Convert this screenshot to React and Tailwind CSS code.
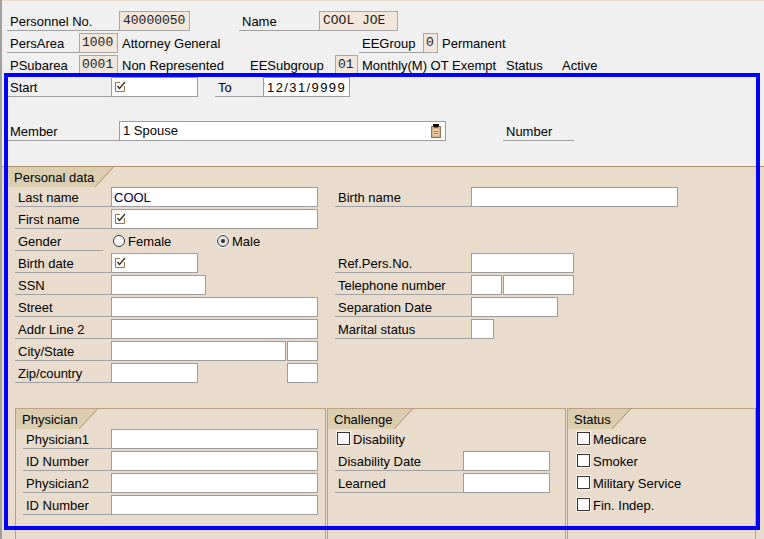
import React from "react";

const Lbl = ({ c = "", children }) => (
  <div className={`h-[20px] shrink-0 border-b border-[#a0a0a0] pl-[3px] pt-[1px] leading-[20px] whitespace-nowrap ${c}`}>{children}</div>
);

const Inp = ({ c = "", children }) => (
  <div className={`h-[20px] shrink-0 border border-[#9c9c9c] bg-white leading-[18px] whitespace-nowrap ${c}`}>{children}</div>
);

const Txt = ({ c = "", children }) => (
  <div className={`pt-[1px] leading-[20px] whitespace-nowrap ${c}`}>{children}</div>
);

const Box = ({ c = "", children }) => (
  <div className={`h-[20px] shrink-0 border border-[#a8a8a8] bg-[#f3e7db] text-[#222] leading-[18px] whitespace-nowrap [font-family:'Liberation_Mono',monospace] ${c}`}>{children}</div>
);

const InitIcon = () => (
  <svg width="11" height="11" viewBox="0 0 11 11" className="block">
    <path d="M0.5 1.5 V10.5 H9.5 V5" fill="none" stroke="#a0703a" />
    <path d="M0.5 1.5 H5" fill="none" stroke="#a0703a" />
    <path d="M2.5 5 L4.5 7.5 L10 1" fill="none" stroke="#2a2a2a" strokeWidth="1.3" />
  </svg>
);

const ClipIcon = () => (
  <svg width="11" height="14" viewBox="0 0 11 14" className="block">
    <rect x="0.5" y="2.5" width="9" height="11" fill="#d8b088" stroke="#9a7048" />
    <rect x="2.5" y="5.5" width="5" height="6" fill="#f2dcc0" stroke="none" />
    <path d="M3 7.5 H7 M3 9.5 H7" stroke="#9a7048" />
    <path d="M2 0 H8 V2 L7 3.5 H3 L2 2 Z" fill="#111" />
  </svg>
);

const Tab = ({ children }) => (
  <div className="flex h-[20px] shrink-0">
    <div className="h-[20px] bg-[#dacdb0] pl-[6px] pr-[1px] pt-[1px] leading-[19px] whitespace-nowrap">{children}</div>
    <svg width="19" height="20" viewBox="0 0 19 20" className="block">
      <polygon points="0,0 18.5,0 0,20" fill="#dacdb0" />
      <line x1="18.5" y1="0" x2="0" y2="20" stroke="#b09068" strokeWidth="1" />
    </svg>
  </div>
);

const Check = () => (
  <div className="mt-[3px] h-[13px] w-[13px] shrink-0 border border-[#333] bg-white shadow-[0_0_0_1px_#f8f4ee]" />
);

const Row = ({ c = "", children }) => <div className={`flex h-[20px] ${c}`}>{children}</div>;

export default function App() {
  return (
    <div className="relative h-[539px] w-[764px] overflow-hidden border-l-2 border-[#a0a0a0] bg-[#f0f0f0] text-[13px] text-black [font-family:'Liberation_Sans',Arial,sans-serif]">
      <div className="h-[1px] bg-[#ead9c8]" />

      {/* header + top of form */}
      <div className="flex flex-col gap-[2px] pl-[5px] pt-[10px]">
        <Row>
          <Lbl c="w-[112px]">Personnel No.</Lbl>
          <Box c="w-[71px] pl-[3px]">40000050</Box>
          <Lbl c="ml-[49px] w-[80px]">Name</Lbl>
          <Box c="w-[79px] pl-[3px]">COOL JOE</Box>
        </Row>
        <Row>
          <Lbl c="w-[72px]">PersArea</Lbl>
          <Box c="w-[39px] pl-[2px]">1000</Box>
          <Txt c="w-[241px] shrink-0 pl-[4px]">Attorney General</Txt>
          <Lbl c="w-[64px]">EEGroup</Lbl>
          <Box c="w-[15px] pl-[2px]">0</Box>
          <Txt c="pl-[4px]">Permanent</Txt>
        </Row>
        <Row>
          <Lbl c="w-[72px]">PSubarea</Lbl>
          <Box c="w-[39px] pl-[2px]">0001</Box>
          <Txt c="w-[129px] shrink-0 pl-[4px]">Non Represented</Txt>
          <Lbl c="w-[88px]">EESubgroup</Lbl>
          <Box c="w-[23px] pl-[2px]">01</Box>
          <Txt c="w-[145px] shrink-0 pl-[4px]">Monthly(M) OT Exempt</Txt>
          <Txt c="w-[56px] shrink-0 pl-[3px]">Status</Txt>
          <Txt c="pl-[3px]">Active</Txt>
        </Row>
        <Row>
          <Lbl c="w-[104px]">Start</Lbl>
          <Inp c="w-[87px] pl-[3px] pt-[3px]">
            <InitIcon />
          </Inp>
          <Lbl c="ml-[17px] w-[48px]">To</Lbl>
          <Inp c="w-[87px] pl-[3px] pt-[1px] tracking-[1.4px]">12/31/9999</Inp>
        </Row>
        <div className="h-[20px]" />
        <Row>
          <Lbl c="w-[112px]">Member</Lbl>
          <Inp c="flex w-[327px] items-center justify-between pl-[3px] pr-[3px]">
            <span>1 Spouse</span>
            <ClipIcon />
          </Inp>
          <Lbl c="ml-[57px] w-[71px]">Number</Lbl>
        </Row>
      </div>

      {/* beige section */}
      <div className="mt-[25px] h-[400px] border-t border-[#b4906a] bg-[#e9dccc]">
        <div className="pl-[6px]">
          <Tab>Personal data</Tab>
        </div>

        <div className="flex pl-[13px]">
          <div className="flex w-[303px] shrink-0 flex-col gap-[2px]">
            <Row>
              <Lbl c="w-[96px]">Last name</Lbl>
              <Inp c="w-[207px] pl-[2px] pt-[1px] text-[#000040]">COOL</Inp>
            </Row>
            <Row>
              <Lbl c="w-[96px]">First name</Lbl>
              <Inp c="w-[207px] pl-[3px] pt-[3px]">
                <InitIcon />
              </Inp>
            </Row>
            <Row c="items-start">
              <Lbl c="w-[88px]">Gender</Lbl>
              <div className="ml-[8px] flex w-[104px] shrink-0 items-start pl-[2px]">
                <div className="mt-[4px] h-[12px] w-[12px] shrink-0 rounded-full border border-[#333] bg-white" />
                <span className="ml-[3px] leading-[22px]">Female</span>
              </div>
              <div className="flex items-start pl-[2px]">
                <div className="mt-[4px] flex h-[12px] w-[12px] shrink-0 items-center justify-center rounded-full border border-[#333] bg-[#e2e2e2] shadow-[0_0_0_1px_#ffffff]">
                  <div className="h-[4px] w-[4px] rounded-full bg-[#333]" />
                </div>
                <span className="ml-[3px] leading-[22px]">Male</span>
              </div>
            </Row>
            <Row>
              <Lbl c="w-[96px]">Birth date</Lbl>
              <Inp c="w-[87px] pl-[3px] pt-[3px]">
                <InitIcon />
              </Inp>
            </Row>
            <Row>
              <Lbl c="w-[96px]">SSN</Lbl>
              <Inp c="w-[95px]" />
            </Row>
            <Row>
              <Lbl c="w-[96px]">Street</Lbl>
              <Inp c="w-[207px]" />
            </Row>
            <Row>
              <Lbl c="w-[96px]">Addr Line 2</Lbl>
              <Inp c="w-[207px]" />
            </Row>
            <Row>
              <Lbl c="w-[96px]">City/State</Lbl>
              <Inp c="w-[175px]" />
              <Inp c="ml-[1px] w-[31px]" />
            </Row>
            <Row>
              <Lbl c="w-[96px]">Zip/country</Lbl>
              <Inp c="w-[87px]" />
              <Inp c="ml-[89px] w-[31px]" />
            </Row>
          </div>

          <div className="ml-[17px] flex flex-col gap-[2px]">
            <Row>
              <Lbl c="w-[136px]">Birth name</Lbl>
              <Inp c="w-[207px]" />
            </Row>
            <div className="h-[20px]" />
            <div className="h-[20px]" />
            <Row>
              <Lbl c="w-[136px]">Ref.Pers.No.</Lbl>
              <Inp c="w-[103px]" />
            </Row>
            <Row>
              <Lbl c="w-[136px]">Telephone number</Lbl>
              <Inp c="w-[31px]" />
              <Inp c="ml-[1px] w-[71px]" />
            </Row>
            <Row>
              <Lbl c="w-[136px]">Separation Date</Lbl>
              <Inp c="w-[87px]" />
            </Row>
            <Row>
              <Lbl c="w-[136px]">Marital status</Lbl>
              <Inp c="w-[23px]" />
            </Row>
          </div>
        </div>

        {/* groups */}
        <div className="mt-[25px] flex pl-[13px]">
          <div className="h-[140px] w-[311px] shrink-0 border border-[#b8a080]">
            <Tab>Physician</Tab>
            <div className="flex flex-col gap-[2px] pl-[7px]">
              <Row>
                <Lbl c="w-[88px]">Physician1</Lbl>
                <Inp c="w-[207px]" />
              </Row>
              <Row>
                <Lbl c="w-[88px]">ID Number</Lbl>
                <Inp c="w-[207px]" />
              </Row>
              <Row>
                <Lbl c="w-[88px]">Physician2</Lbl>
                <Inp c="w-[207px]" />
              </Row>
              <Row>
                <Lbl c="w-[88px]">ID Number</Lbl>
                <Inp c="w-[207px]" />
              </Row>
            </div>
          </div>

          <div className="ml-[1px] h-[140px] w-[239px] shrink-0 border border-[#b8a080]">
            <Tab>Challenge</Tab>
            <div className="flex flex-col gap-[2px]">
              <Row c="items-start pl-[9px]">
                <Check />
                <span className="ml-[3px] leading-[22px]">Disability</span>
              </Row>
              <Row c="pl-[7px]">
                <Lbl c="w-[128px]">Disability Date</Lbl>
                <Inp c="w-[87px]" />
              </Row>
              <Row c="pl-[7px]">
                <Lbl c="w-[128px]">Learned</Lbl>
                <Inp c="w-[87px]" />
              </Row>
            </div>
          </div>

          <div className="ml-[1px] h-[140px] w-[189px] shrink-0 border border-[#b8a080]">
            <Tab>Status</Tab>
            <div className="flex flex-col gap-[2px]">
              {["Medicare", "Smoker", "Military Service", "Fin. Indep."].map((t) => (
                <Row key={t} c="items-start pl-[9px]">
                  <Check />
                  <span className="ml-[3px] leading-[22px] whitespace-nowrap">{t}</span>
                </Row>
              ))}
            </div>
          </div>
        </div>
      </div>

      {/* selection highlight overlay */}
      <div className="pointer-events-none absolute left-[2px] top-[73px] h-[457px] w-[756px] border-4 border-[#0000ff]" />
    </div>
  );
}
